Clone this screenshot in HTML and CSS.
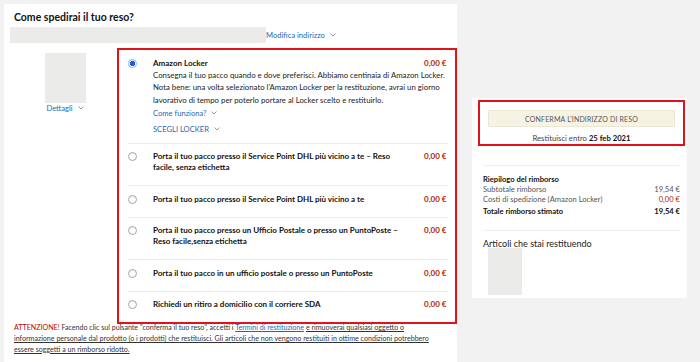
FILE: index.html
```html
<!DOCTYPE html>
<html lang="it">

<head>
    <meta charset="UTF-8">
    <title>Come spedirai il tuo reso?</title>
    <link rel="stylesheet" href="styles.css">
</head>

<body>
    <div class="page">
        <div class="main">
            <h1 class="title">Come spedirai il tuo reso?</h1>
            <div class="address-row">
                <div class="address-bar"></div>
                <a class="link" href="#">Modifica indirizzo <svg class="caret" width="6" height="4" viewBox="0 0 6 4"><polyline points="0.5,0.5 3,3 5.5,0.5" /></svg></a>
            </div>

            <div class="content">
                <div class="product">
                    <div class="thumb"></div>
                    <a class="link" href="#">Dettagli <svg class="caret" width="6" height="4" viewBox="0 0 6 4"><polyline points="0.5,0.5 3,3 5.5,0.5" /></svg></a>
                </div>

                <div class="options">
                    <div class="option option-first">
                        <span class="radio checked"></span>
                        <div class="option-title">Amazon Locker</div>
                        <span class="price">0,00 €</span>
                        <div class="option-more">
                            <p class="option-desc">Consegna il tuo pacco quando e dove preferisci. Abbiamo centinaia di Amazon Locker. Nota bene: una volta selezionato l'Amazon Locker per la restituzione, avrai un giorno lavorativo di tempo per poterlo portare al Locker scelto e restituirlo.</p>
                            <a class="link how" href="#">Come funziona? <svg class="caret" width="6" height="4" viewBox="0 0 6 4"><polyline points="0.5,0.5 3,3 5.5,0.5" /></svg></a>
                            <a class="link locker" href="#">SCEGLI LOCKER <svg class="caret" width="6" height="4" viewBox="0 0 6 4"><polyline points="0.5,0.5 3,3 5.5,0.5" /></svg></a>
                        </div>
                    </div>
                    <div class="option">
                        <span class="radio"></span>
                        <div class="option-title">Porta il tuo pacco presso il Service Point DHL più vicino a te – Reso facile, senza etichetta</div>
                        <span class="price">0,00 €</span>
                    </div>
                    <div class="option">
                        <span class="radio"></span>
                        <div class="option-title">Porta il tuo pacco presso il Service Point DHL più vicino a te</div>
                        <span class="price">0,00 €</span>
                    </div>
                    <div class="option">
                        <span class="radio"></span>
                        <div class="option-title">Porta il tuo pacco presso un Ufficio Postale o presso un PuntoPoste – Reso facile,senza etichetta</div>
                        <span class="price">0,00 €</span>
                    </div>
                    <div class="option">
                        <span class="radio"></span>
                        <div class="option-title">Porta il tuo pacco in un ufficio postale o presso un PuntoPoste</div>
                        <span class="price">0,00 €</span>
                    </div>
                    <div class="option option-last">
                        <span class="radio"></span>
                        <div class="option-title">Richiedi un ritiro a domicilio con il corriere SDA</div>
                        <span class="price">0,00 €</span>
                    </div>
                </div>
            </div>

            <p class="notice"><span class="alert">ATTENZIONE!</span> Facendo clic sul pulsante "conferma il tuo reso", accetti i <a class="terms" href="#">Termini di restituzione</a> <span class="underlined">e rimuoverai qualsiasi oggetto o informazione personale dal prodotto (o i prodotti) che restituisci. Gli articoli che non vengono restituiti in ottime condizioni potrebbero essere soggetti a un rimborso ridotto.</span></p>
        </div>

        <div class="side">
            <div class="side-panel">
                <div class="confirm">
                    <button class="confirm-btn">CONFERMA L'INDIRIZZO DI RESO</button>
                    <div class="deadline">Restituisci entro <b>25 feb 2021</b></div>
                </div>

                <div class="summary">
                    <div class="summary-title">Riepilogo del rimborso</div>
                    <div class="summary-row"><span>Subtotale rimborso</span><span>19,54 €</span></div>
                    <div class="summary-row"><span>Costi di spedizione (Amazon Locker)</span><span class="red">0,00 €</span></div>
                    <div class="summary-row total"><span>Totale rimborso stimato</span><span>19,54 €</span></div>
                </div>

                <div class="items">
                    <div class="items-title">Articoli che stai restituendo</div>
                    <div class="item-thumb"></div>
                </div>
            </div>
        </div>
    </div>
</body>

</html>
```

FILE: styles.css
```css
* {
    margin: 0;
    padding: 0;
    box-sizing: border-box;
}

body {
    background: #f2f2f2;
    font-family: Lato, "Liberation Sans", sans-serif;
    font-size: 8px;
    color: #111;
    overflow: hidden;
}

.page {
    display: flex;
    align-items: flex-start;
    width: 700px;
    height: 362px;
}

a {
    text-decoration: none;
}

.link {
    color: #1f68b3;
    font-size: 7.6px;
    line-height: 11px;
}

.caret {
    margin-left: 3px;
    vertical-align: 1px;
    fill: none;
    stroke: #999;
    stroke-width: 1;
}

/* left column */

.main {
    width: 453px;
    height: 358px;
    margin: 4px 0 0 4px;
    background: #fff;
    padding-top: 7px;
}

.title {
    font-size: 10.5px;
    font-weight: 700;
    line-height: 12px;
    padding-left: 10px;
    margin-bottom: 4px;
}

.address-row {
    display: flex;
    align-items: center;
    padding-left: 6px;
}

.address-bar {
    width: 256px;
    height: 16px;
    background: #ebebea;
}

.content {
    display: flex;
    margin-top: 5px;
}

.product {
    width: 113px;
    display: flex;
    flex-direction: column;
    align-items: center;
    padding: 5px 0 0 9px;
}

.thumb {
    width: 41px;
    height: 50px;
    background: #ebebea;
}

.options {
    width: 340px;
    height: 276px;
    border: 2px solid #e3111b;
    padding: 0 7px 0 9px;
}

.option {
    display: grid;
    grid-template-columns: 25px 1fr auto;
    align-items: start;
    border-bottom: 1px solid #ececec;
    padding: 7.5px 0 12px;
}

.option-first {
    padding-bottom: 7.5px;
}

.option-last {
    border-bottom: none;
}

.radio {
    width: 9px;
    height: 9px;
    margin-top: 1px;
    border: 1px solid #a6a6a6;
    border-radius: 50%;
    background: #fff;
    box-shadow: inset 0 1px 1px rgba(0, 0, 0, .08);
}

.radio.checked {
    border-color: #8fb3e8;
    background: radial-gradient(circle, #1a5fd6 0 2.3px, #fff 2.9px);
}

.option-title {
    max-width: 250px;
    font-weight: 700;
    line-height: 11px;
}

.price {
    color: #b12704;
    font-weight: 700;
    line-height: 11px;
    white-space: nowrap;
    margin-right: 1.5px;
}

.option-more {
    grid-column: 2 / 4;
}

.option-desc {
    font-size: 7.8px;
    line-height: 12.5px;
    color: #222;
}

.how,
.locker {
    display: block;
}

.how {
    margin-top: 2px;
}

.locker {
    margin-top: 5px;
}

.notice {
    font-size: 7.1px;
    line-height: 10.8px;
    margin-top: -1px;
    padding: 0 18px 0 10px;
    color: #333;
}

.underlined {
    text-decoration: underline;
}

.alert {
    color: #c40000;
}

.terms {
    color: #1f68b3;
    text-decoration: underline;
}

/* right column */

.side {
    width: 215px;
    margin: 98px 0 0 15px;
}

.side-panel {
    height: 200px;
    background: #fff;
    padding: 2px 2px 0 6px;
}

.confirm {
    border: 2px solid #e3111b;
    padding: 8px 8px 1px;
    text-align: center;
}

.confirm-btn {
    display: block;
    width: 100%;
    height: 17px;
    background: #f6f3e5;
    border: 1px solid #ebe7d5;
    border-radius: 1px;
    color: #555;
    font-family: inherit;
    font-size: 7px;
    letter-spacing: .15px;
}

.deadline {
    margin-top: 6px;
    line-height: 10px;
    font-size: 7.7px;
    color: #444;
}

.deadline b {
    color: #111;
}

.summary {
    margin: 19px 5px 0 5px;
    border-top: 1px solid #eee;
    padding-top: 8px;
    font-size: 7.6px;
    line-height: 10px;
}

.summary-title {
    font-weight: 700;
    color: #111;
}

.summary-row {
    display: flex;
    justify-content: space-between;
    color: #555;
}

.summary-row .red {
    color: #b12704;
}

.summary-row.total {
    margin-top: 2px;
    font-weight: 700;
    color: #111;
}

.items {
    margin: 14px 5px 0 5px;
    border-top: 1px solid #eee;
    padding-top: 7px;
}

.items-title {
    font-size: 9px;
    line-height: 11px;
    color: #222;
}

.item-thumb {
    width: 34px;
    height: 47px;
    margin: -1px 0 0 5px;
    background: #ebebea;
}
```
